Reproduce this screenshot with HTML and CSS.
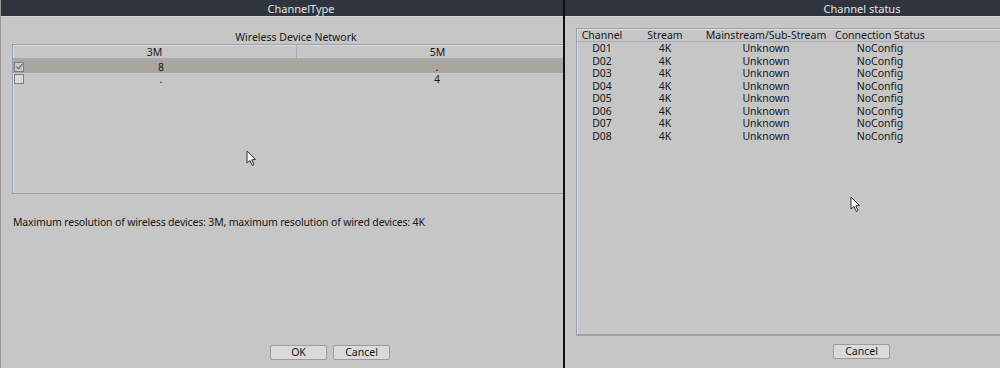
FILE: index.html
```html
<!DOCTYPE html>
<html lang="en">
<head>
    <meta charset="UTF-8">
    <meta name="viewport" content="width=device-width, initial-scale=1.0">
    <title>Channel Type</title>
    <link rel="stylesheet" href="styles.css">
</head>
<body>
    <div class="screen">
        <div class="window window-left">
            <div class="inner inner-left">
                <div class="titlebar">ChannelType</div>
                <div class="content">
                    <div class="caption">Wireless Device Network</div>
                    <div class="type-table">
                        <div class="type-head">
                            <div class="type-col">3M</div>
                            <div class="type-col">5M</div>
                        </div>
                        <div class="type-row selected">
                            <span class="check checked">
                                <svg width="9" height="9" viewBox="0 0 9 9"><path d="M1.5 4.5 L3.5 6.8 L7.5 1.8" fill="none" stroke="#666" stroke-width="1.1"/></svg>
                            </span>
                            <div class="type-cell first">8</div>
                            <div class="type-cell">.</div>
                        </div>
                        <div class="type-row">
                            <span class="check"></span>
                            <div class="type-cell first">.</div>
                            <div class="type-cell">4</div>
                        </div>
                    </div>
                    <p class="note">Maximum resolution of wireless devices: 3M, maximum resolution of wired devices: 4K</p>
                    <div class="buttons buttons-left">
                        <button>OK</button>
                        <button>Cancel</button>
                    </div>
                </div>
            </div>
        </div>
        <div class="divider"></div>
        <div class="window window-right">
            <div class="inner inner-right">
                <div class="titlebar">Channel status</div>
                <div class="content">
                    <div class="status-box">
                        <div class="status-row status-head">
                            <div>Channel</div>
                            <div>Stream</div>
                            <div>Mainstream/Sub-Stream</div>
                            <div>Connection Status</div>
                        </div>
                        <div id="status-rows"></div>
                    </div>
                    <div class="buttons buttons-right">
                        <button>Cancel</button>
                    </div>
                </div>
            </div>
        </div>

        <svg class="cursor cursor-left" width="11" height="17" viewBox="0 0 11 17"><path d="M1 1 L1 13 L4 10.5 L6.3 15.5 L8 14.7 L5.8 9.8 L9.5 9.5 Z" fill="#fafafa" stroke="#333" stroke-width="1"/></svg>
        <svg class="cursor cursor-right" width="11" height="17" viewBox="0 0 11 17"><path d="M1 1 L1 13 L4 10.5 L6.3 15.5 L8 14.7 L5.8 9.8 L9.5 9.5 Z" fill="#fafafa" stroke="#333" stroke-width="1"/></svg>
    </div>

    <script>
        const channels = ['D01', 'D02', 'D03', 'D04', 'D05', 'D06', 'D07', 'D08'];
        const rows = document.getElementById('status-rows');
        channels.forEach(function(ch) {
            const row = document.createElement('div');
            row.className = 'status-row';
            [ch, '4K', 'Unknown', 'NoConfig'].forEach(function(text) {
                const cell = document.createElement('div');
                cell.textContent = text;
                row.appendChild(cell);
            });
            rows.appendChild(row);
        });
    </script>
</body>
</html>
```

FILE: styles.css
```css
body {
    margin: 0;
    padding: 0;
    background-color: #c6c6c6;
    font-family: 'Noto Sans', 'Liberation Sans', sans-serif;
    font-size: 10.5px;
    color: #161616;
}

.screen {
    position: relative;
    display: flex;
    width: 1000px;
    height: 368px;
    overflow: hidden;
}

.window {
    height: 368px;
    overflow: hidden;
    background-color: #c6c6c6;
}

.window-left {
    width: 563px;
    border-left: 1px solid #9a9a9a;
    box-sizing: border-box;
}

.window-right {
    flex: 1;
}

.divider {
    width: 2px;
    background-color: #111;
}

.inner-left {
    width: 600px;
}

.inner-right {
    width: 594px;
}

.titlebar {
    height: 17px;
    line-height: 17px;
    font-size: 11px;
    background-color: #2f343e;
    color: #e6e6e6;
    text-align: center;
    border-bottom: 1px solid #d6d6d6;
    box-sizing: border-box;
}

/* left dialog */

.caption {
    margin-top: 13px;
    height: 14px;
    line-height: 14px;
    text-align: center;
    padding-right: 10px;
}

.type-table {
    margin-left: 11px;
    width: 567px;
    height: 150px;
    border: 1px solid #9aa3ad;
    box-shadow: inset 1px 1px 0 #dcdcdc;
    box-sizing: border-box;
}

.type-head {
    display: flex;
    height: 13px;
    line-height: 14px;
    border-bottom: 2px solid #a3abb5;
}

.type-col {
    text-align: center;
}

.type-col:first-child {
    width: 283px;
    border-right: 1px solid #a3abb5;
}

.type-col:last-child {
    flex: 1;
}

.type-row {
    display: flex;
    align-items: center;
    height: 12px;
    line-height: 12px;
}

.type-row.selected {
    background-color: #a9a69f;
    height: 13px;
}

.check {
    display: inline-flex;
    width: 10px;
    height: 10px;
    margin-left: 1px;
    margin-right: 2px;
    border: 1px solid #7d7d7d;
    background-color: #d8d8d8;
    box-sizing: border-box;
}

.check.checked {
    background-color: #c8c8c8;
}

.check svg {
    margin: -0.5px;
}

.type-cell {
    text-align: center;
}

.type-cell.first {
    width: 270px;
}

.type-cell:last-child {
    flex: 1;
}

.note {
    margin: 21px 0 0 12px;
    height: 14px;
    line-height: 14px;
    letter-spacing: -0.17px;
}

.buttons {
    display: flex;
    gap: 6px;
}

.buttons-left {
    margin-top: 116px;
    margin-left: 269px;
}

button {
    width: 57px;
    height: 15px;
    padding: 0;
    font-family: inherit;
    font-size: 10.5px;
    line-height: 13px;
    color: #161616;
    background-color: #dadada;
    border: 1px solid #9b9b9b;
    border-radius: 2px;
}

/* right dialog */

.status-box {
    margin: 11px 0 0 11px;
    height: 308px;
    border: 1px solid #9aa3ad;
    border-bottom: 2px solid #9aa3ad;
    box-shadow: inset 1px 1px 0 #dcdcdc;
    box-sizing: border-box;
}

.status-row {
    display: grid;
    grid-template-columns: 50px 76px 126px 102px;
    height: 12.5px;
    line-height: 12.5px;
    text-align: center;
}

.status-head {
    height: 12px;
    line-height: 13px;
    border-bottom: 1px solid #a3abb5;
    margin-bottom: 0;
}

.buttons-right {
    margin-top: 8px;
    margin-left: 268px;
}

.cursor {
    position: absolute;
}

.cursor-left {
    left: 246px;
    top: 150px;
}

.cursor-right {
    left: 850px;
    top: 196px;
}
```
